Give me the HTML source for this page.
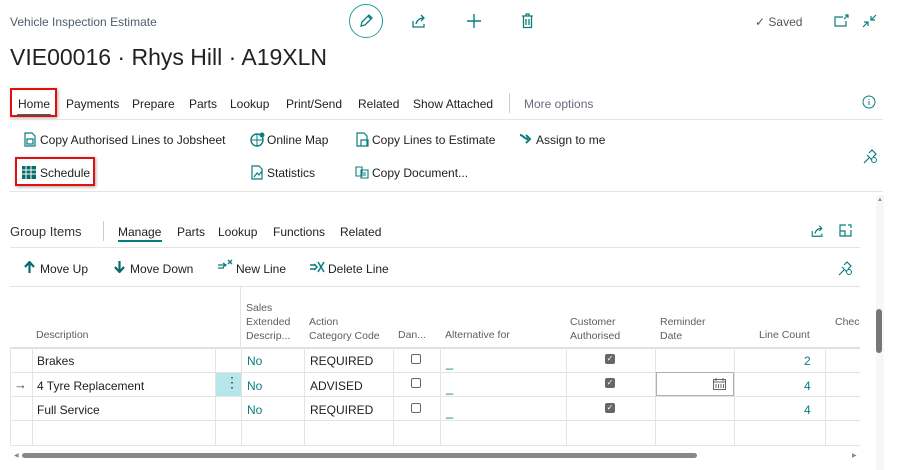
<!DOCTYPE html>
<html><head><meta charset="utf-8"><style>
*{margin:0;padding:0;box-sizing:border-box}
body{width:900px;height:470px;background:#fff;font-family:"Liberation Sans",sans-serif;color:#212121;position:relative;overflow:hidden}
.a{position:absolute;white-space:nowrap}
.t{font-size:12px;line-height:14px}
.tl{color:#0a7d7d}
.h{font-size:10.5px;color:#605e5c;line-height:14px}
.hl{position:absolute;background:#e4e4e4;height:1px}
.vl{position:absolute;background:#e4e4e4;width:1px}
.red{position:absolute;border:2px solid #e01010;box-shadow:1px 1px 3px rgba(0,0,0,.35)}
.cb{position:absolute;width:10px;height:10px;border:1px solid #666;border-radius:2px}
.cbc{position:absolute;width:10px;height:10px;background:#666;border-radius:2px;color:#fff;font-size:8px;line-height:10px;text-align:center}
svg{position:absolute}
</style></head><body>
<div class="a t" style="left:10px;top:15px;color:#505c6d">Vehicle Inspection Estimate</div>
<div class="a" style="left:349px;top:4px;width:34px;height:34px;border:1px solid #2a9d9d;border-radius:50%"></div>
<svg style="left:358px;top:13px" width="16" height="16" viewBox="0 0 16 16"><path d="M3 13l1-4 7-7 3 3-7 7z M10 3l3 3" fill="none" stroke="#0a7d7d" stroke-width="1.3"/></svg>
<svg style="left:411px;top:13px" width="16" height="16" viewBox="0 0 16 16"><path d="M2 8v6h11v-3 M5 11c1-4 4-6 8-6 M10 2l3 3-3 3" fill="none" stroke="#0a7d7d" stroke-width="1.3"/></svg>
<svg style="left:466px;top:13px" width="16" height="16" viewBox="0 0 16 16"><path d="M8 1v14M1 8h14" stroke="#0a7d7d" stroke-width="1.4"/></svg>
<svg style="left:521px;top:13px" width="13" height="16" viewBox="0 0 13 16"><path d="M1 3h11M5 3V1h3v2M2.5 3.5v11h8v-11M5 6v6M8 6v6" fill="none" stroke="#0a7d7d" stroke-width="1.3"/></svg>
<div class="a t" style="left:755px;top:15px;color:#555">✓ Saved</div>
<svg style="left:834px;top:14px" width="15" height="13" viewBox="0 0 15 13"><path d="M9 3H1v9h11V7 M11 1h3v3M14 1l-4 4" fill="none" stroke="#0a7d7d" stroke-width="1.2"/></svg>
<svg style="left:862px;top:14px" width="15" height="14" viewBox="0 0 15 14"><path d="M14 1l-5 5M9 2v4h4M1 13l5-5M2 8h4v4" fill="none" stroke="#0a7d7d" stroke-width="1.2"/></svg>
<div class="a" style="left:10px;top:44px;font-size:23px;color:#222">VIE00016 · Rhys Hill · A19XLN</div>

<div class="a t" style="left:18px;top:97px">Home</div>
<div class="a" style="left:17px;top:114px;width:34px;height:2px;background:#0a7d7d"></div>
<div class="red" style="left:10px;top:88px;width:47px;height:29px"></div>
<div class="a t" style="left:66px;top:97px">Payments</div>
<div class="a t" style="left:132px;top:97px">Prepare</div>
<div class="a t" style="left:189px;top:97px">Parts</div>
<div class="a t" style="left:230px;top:97px">Lookup</div>
<div class="a t" style="left:286px;top:97px">Print/Send</div>
<div class="a t" style="left:358px;top:97px">Related</div>
<div class="a t" style="left:413px;top:97px">Show Attached</div>
<div class="vl" style="left:509px;top:93px;height:20px;background:#ccc"></div>
<div class="a t" style="left:524px;top:97px;color:#6a6a7a">More options</div>
<svg style="left:862px;top:95px" width="14" height="14" viewBox="0 0 14 14"><circle cx="7" cy="7" r="6" fill="none" stroke="#0a7d7d"/><path d="M7 6v4M7 4v1" stroke="#0a7d7d"/></svg>
<div class="hl" style="left:10px;top:119px;width:873px"></div>

<svg style="left:24px;top:132px" width="12" height="15" viewBox="0 0 12 15"><path d="M1 1h7l3 3v10H1z M3 7h6v5H3z" fill="none" stroke="#0a7d7d" stroke-width="1.2"/></svg>
<div class="a t" style="left:40px;top:133px">Copy Authorised Lines to Jobsheet</div>
<svg style="left:250px;top:132px" width="15" height="15" viewBox="0 0 15 15"><circle cx="7" cy="8" r="6" fill="none" stroke="#0a7d7d" stroke-width="1.4"/><path d="M1 8h12M7 2v12" stroke="#0a7d7d"/><circle cx="12" cy="3" r="2.5" fill="#0a7d7d"/></svg>
<div class="a t" style="left:267px;top:133px">Online Map</div>
<svg style="left:356px;top:132px" width="13" height="15" viewBox="0 0 13 15"><path d="M1 1h7l3 3v10H1z M5 8h7v6H5z" fill="none" stroke="#0a7d7d" stroke-width="1.2"/></svg>
<div class="a t" style="left:372px;top:133px">Copy Lines to Estimate</div>
<svg style="left:519px;top:133px" width="14" height="12" viewBox="0 0 14 12"><path d="M1 2c3 0 4 4 8 4 M7 2l4 4-4 4" fill="none" stroke="#0a7d7d" stroke-width="2"/></svg>
<div class="a t" style="left:536px;top:133px">Assign to me</div>

<svg style="left:22px;top:166px" width="14" height="13" viewBox="0 0 14 13"><rect x="0" y="0" width="14" height="13" fill="#0a6b6b"/><path d="M4 0v13M9 0v13M0 4h14M0 8h14" stroke="#fff" stroke-width="1"/></svg>
<div class="a t" style="left:40px;top:166px">Schedule</div>
<div class="red" style="left:15px;top:157px;width:80px;height:29px"></div>
<svg style="left:251px;top:165px" width="13" height="15" viewBox="0 0 13 15"><path d="M1 1h7l3 3v10H1z M3 12l3-4 2 2 3-4" fill="none" stroke="#0a7d7d" stroke-width="1.2"/></svg>
<div class="a t" style="left:267px;top:166px">Statistics</div>
<svg style="left:355px;top:166px" width="14" height="13" viewBox="0 0 14 13"><path d="M1 1h6v9H1z M6 4h7v8H6z M8 7h3M8 9h3" fill="none" stroke="#0a7d7d" stroke-width="1.1"/></svg>
<div class="a t" style="left:372px;top:166px">Copy Document...</div>
<svg style="left:863px;top:149px" width="15" height="15" viewBox="0 0 15 15"><path d="M1 14l5-5M4 6l5 5M6 4l3-3 4 4-3 3" fill="none" stroke="#0a7d7d" stroke-width="1.2"/><circle cx="11" cy="11" r="2.5" fill="none" stroke="#0a7d7d"/></svg>
<div class="hl" style="left:10px;top:191px;width:873px"></div>

<div class="a" style="left:876px;top:195px;width:8px;height:275px;background:#f7f7f7"></div>
<div class="a" style="left:876px;top:309px;width:6px;height:44px;background:#777;border-radius:3px"></div>
<div class="a" style="left:877px;top:197px;font-size:6px;color:#888">▲</div>

<div class="a" style="left:10px;top:224px;font-size:13px;color:#333">Group Items</div>
<div class="vl" style="left:103px;top:221px;height:20px;background:#ccc"></div>
<div class="a t" style="left:118px;top:225px">Manage</div>
<div class="a" style="left:118px;top:240px;width:44px;height:2px;background:#0a7d7d"></div>
<div class="a t" style="left:177px;top:225px">Parts</div>
<div class="a t" style="left:218px;top:225px">Lookup</div>
<div class="a t" style="left:273px;top:225px">Functions</div>
<div class="a t" style="left:340px;top:225px">Related</div>
<svg style="left:810px;top:224px" width="15" height="14" viewBox="0 0 16 16"><path d="M2 8v6h11v-3 M5 11c1-4 4-6 8-6 M10 2l3 3-3 3" fill="none" stroke="#0a7d7d" stroke-width="1.3"/></svg>
<svg style="left:839px;top:224px" width="13" height="13" viewBox="0 0 13 13"><path d="M7 1H1v11h11V6 M1 7h5v5 M9 1h3v3" fill="none" stroke="#0a7d7d" stroke-width="1.2"/></svg>
<div class="hl" style="left:10px;top:247px;width:850px"></div>

<svg style="left:24px;top:261px" width="11" height="12" viewBox="0 0 11 12"><path d="M5.5 12V2M1 6l4.5-5 4.5 5" fill="none" stroke="#0a6b6b" stroke-width="2.2"/></svg>
<div class="a t" style="left:40px;top:262px">Move Up</div>
<svg style="left:114px;top:261px" width="11" height="12" viewBox="0 0 11 12"><path d="M5.5 0v10M1 6l4.5 5 4.5-5" fill="none" stroke="#0a6b6b" stroke-width="2.2"/></svg>
<div class="a t" style="left:130px;top:262px">Move Down</div>
<svg style="left:218px;top:259px" width="15" height="13" viewBox="0 0 15 13"><path d="M0 6h8M0 9h6M5 4l3 2-3 2 M10 1l4 4M14 1l-4 4" fill="none" stroke="#0a7d7d" stroke-width="1.3"/></svg>
<div class="a t" style="left:236px;top:262px">New Line</div>
<svg style="left:310px;top:261px" width="15" height="12" viewBox="0 0 15 12"><path d="M0 4h6M0 8h6M4 3l3 3-3 3 M8 1l6 10M14 1L8 11" fill="none" stroke="#0a7d7d" stroke-width="1.5"/></svg>
<div class="a t" style="left:328px;top:262px">Delete Line</div>
<svg style="left:838px;top:261px" width="15" height="15" viewBox="0 0 15 15"><path d="M1 14l5-5M4 6l5 5M6 4l3-3 4 4-3 3" fill="none" stroke="#0a7d7d" stroke-width="1.2"/><circle cx="11" cy="11" r="2.5" fill="none" stroke="#0a7d7d"/></svg>
<div class="hl" style="left:10px;top:286px;width:850px"></div>

<div class="vl" style="left:240px;top:287px;height:60px"></div>
<div class="a h" style="left:36px;top:328px">Description</div>
<div class="a h" style="left:246px;top:301px">Sales<br>Extended<br>Descrip...</div>
<div class="a h" style="left:309px;top:315px">Action<br>Category Code</div>
<div class="a h" style="left:398px;top:328px">Dan...</div>
<div class="a h" style="left:445px;top:328px">Alternative for</div>
<div class="a h" style="left:570px;top:315px">Customer<br>Authorised</div>
<div class="a h" style="left:660px;top:315px">Reminder<br>Date</div>
<div class="a h" style="left:759px;top:328px">Line Count</div>
<div class="a h" style="left:835px;top:315px;width:25px;overflow:hidden">Check</div>

<div class="hl" style="left:10px;top:347px;width:850px;background:#e0e0e0;height:2px"></div>
<div class="hl" style="left:10px;top:372px;width:850px"></div>
<div class="hl" style="left:10px;top:396px;width:850px"></div>
<div class="hl" style="left:10px;top:420px;width:850px"></div>
<div class="hl" style="left:10px;top:445px;width:850px"></div>
<div class="vl" style="left:10px;top:347px;height:98px"></div>
<div class="vl" style="left:32px;top:347px;height:98px"></div>
<div class="vl" style="left:215px;top:347px;height:98px"></div>
<div class="vl" style="left:241px;top:347px;height:98px"></div>
<div class="vl" style="left:304px;top:347px;height:98px"></div>
<div class="vl" style="left:393px;top:347px;height:98px"></div>
<div class="vl" style="left:440px;top:347px;height:98px"></div>
<div class="vl" style="left:566px;top:347px;height:98px"></div>
<div class="vl" style="left:655px;top:347px;height:98px"></div>
<div class="vl" style="left:734px;top:347px;height:98px"></div>
<div class="vl" style="left:825px;top:347px;height:98px"></div>
<div class="a" style="left:216px;top:373px;width:25px;height:23px;background:#b4e6ea"></div>
<div class="a" style="left:225px;top:374px;font-size:14px;color:#333">⋮</div>
<div class="a" style="left:14px;top:377px;font-size:13px;color:#444">→</div>

<div class="a t" style="left:37px;top:354px">Brakes</div>
<div class="a t" style="left:37px;top:379px">4 Tyre Replacement</div>
<div class="a t" style="left:37px;top:403px">Full Service</div>
<div class="a t tl" style="left:247px;top:354px">No</div>
<div class="a t tl" style="left:247px;top:379px">No</div>
<div class="a t tl" style="left:247px;top:403px">No</div>
<div class="a t" style="left:310px;top:354px">REQUIRED</div>
<div class="a t" style="left:310px;top:379px">ADVISED</div>
<div class="a t" style="left:310px;top:403px">REQUIRED</div>
<div class="cb" style="left:411px;top:354px"></div>
<div class="cb" style="left:411px;top:378px"></div>
<div class="cb" style="left:411px;top:403px"></div>
<div class="a tl" style="left:446px;top:355px;font-size:13px">_</div>
<div class="a tl" style="left:446px;top:380px;font-size:13px">_</div>
<div class="a tl" style="left:446px;top:404px;font-size:13px">_</div>
<div class="cbc" style="left:605px;top:354px">✓</div>
<div class="cbc" style="left:605px;top:378px">✓</div>
<div class="cbc" style="left:605px;top:403px">✓</div>
<div class="a" style="left:656px;top:372px;width:78px;height:24px;border:1px solid #a8b0bc"></div>
<svg style="left:713px;top:378px" width="13" height="12" viewBox="0 0 13 12"><rect x="0.5" y="1.5" width="12" height="10" fill="none" stroke="#666"/><path d="M0.5 4h12M3 0v3M10 0v3M3 6v4M5.5 6v4M8 6v4M10.5 6v4" stroke="#666"/></svg>
<div class="a t tl" style="left:804px;top:354px">2</div>
<div class="a t tl" style="left:804px;top:379px">4</div>
<div class="a t tl" style="left:804px;top:403px">4</div>

<div class="a" style="left:14px;top:452px;font-size:6px;color:#888">◀</div>
<div class="a" style="left:22px;top:453px;width:675px;height:5px;background:#888;border-radius:3px"></div>
<div class="a" style="left:852px;top:452px;font-size:6px;color:#888">▶</div>
</body></html>
